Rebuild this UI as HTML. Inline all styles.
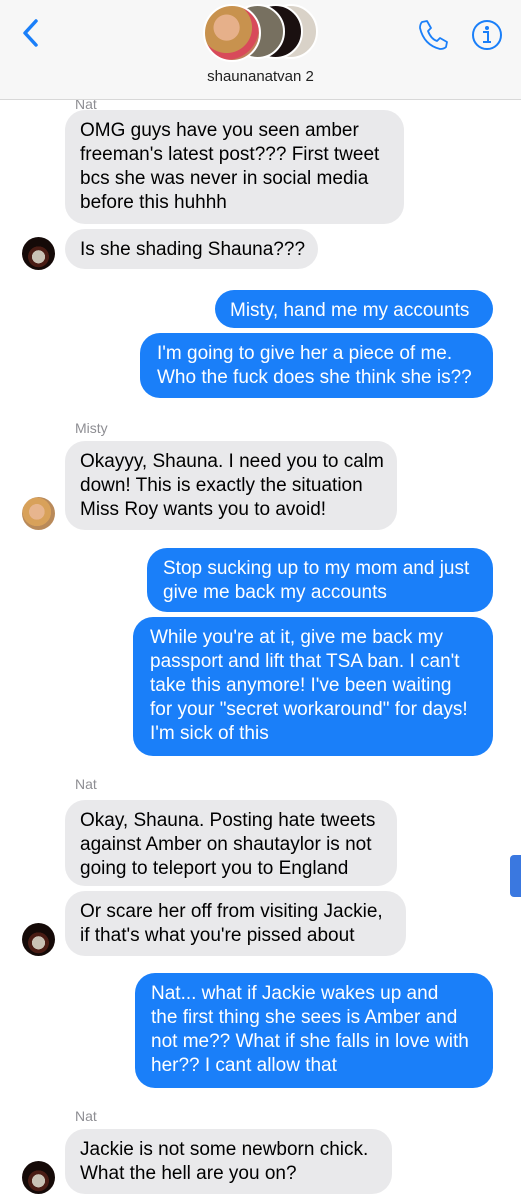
<!DOCTYPE html>
<html><head><meta charset="utf-8"><style>
*{margin:0;padding:0;box-sizing:border-box}
body{width:521px;height:1200px;overflow:hidden;background:#fff;font-family:"Liberation Sans",sans-serif;position:relative}
.hdr{position:absolute;left:0;top:0;width:521px;height:100px;background:#f7f7f7;border-bottom:1px solid #d8d8d8}
.b{position:absolute;border-radius:20px;font-size:19px;line-height:24px;padding:9px 15px 8px 15px;white-space:nowrap}
.g{background:#e9e9eb;color:#000}
.u{background:#1a7ff9;color:#fff}
.av{position:absolute;left:22px;width:33px;height:33px;border-radius:50%;background:radial-gradient(circle at 50% 60%,#c9c2b5 0 25%,#4a1c14 26% 40%,#150a08 41%)}
.av.m{background:radial-gradient(circle at 45% 45%,#e7b58e 0 30%,#d8a15a 31% 55%,#b98a5a 56%)}
.lbl{position:absolute;left:75px;font-size:14px;color:#8e8e93}
</style></head><body>
<div class="hdr">
<svg style="position:absolute;left:20px;top:18px" width="20" height="30"><path d="M16 3 L5 15 L16 27" fill="none" stroke="#1a7ff9" stroke-width="3.5" stroke-linecap="round" stroke-linejoin="round"/></svg>
<div style="position:absolute;left:263px;top:4px;width:55px;height:55px;border-radius:50%;border:2px solid #fff;background:#d9d2c8"></div>
<div style="position:absolute;left:248px;top:4px;width:55px;height:55px;border-radius:50%;border:2px solid #fff;background:#1a1010"></div>
<div style="position:absolute;left:230px;top:4px;width:55px;height:55px;border-radius:50%;border:2px solid #fff;background:#777060"></div>
<div style="position:absolute;left:203px;top:4px;width:58px;height:58px;border-radius:50%;border:2px solid #fff;background:radial-gradient(circle at 40% 40%,#e6b08a 0 28%,#c8924e 29% 55%,#d84a5a 56% 70%,#c27f5a 71%)"></div>
<div style="position:absolute;left:0;width:521px;top:68px;text-align:center;font-size:15px;color:#222">shaunanatvan 2</div>
<svg style="position:absolute;left:416px;top:18px" width="34" height="34" viewBox="0 0 34 34"><path d="M6 4 L11 3 L15 10 L12 13 Q15 21 21 23 L24 20 L31 24 L30 29 Q28 31 24 31 Q8 27 4 10 Q4 6 6 4Z" fill="none" stroke="#1a7ff9" stroke-width="1.8" stroke-linejoin="round"/></svg>
<svg style="position:absolute;left:471px;top:19px" width="32" height="32"><circle cx="16" cy="16" r="14" fill="none" stroke="#1a7ff9" stroke-width="2"/><circle cx="16" cy="9" r="2" fill="#1a7ff9"/><path d="M12 13 H17 V23 H20 M12 23 H20" stroke="#1a7ff9" stroke-width="2" fill="none"/></svg>
</div>
<div class="lbl" style="top:96px;clip-path:inset(4px 0 0 0)">Nat</div>
<div class="b g" style="left:65px;top:110px;width:339px;height:114px">OMG guys have you seen amber<br>freeman's latest post??? First tweet<br>bcs she was never in social media<br>before this huhhh</div>
<div class="av" style="top:237px"></div>
<div class="b g" style="left:65px;top:229px;width:253px;height:40px">Is she shading Shauna???</div>
<div class="b u" style="left:215px;top:290px;width:278px;height:38px">Misty, hand me my accounts</div>
<div class="b u" style="left:140px;top:333px;width:353px;height:65px;padding-left:17px">I'm going to give her a piece of me.<br>Who the fuck does she think she is??</div>
<div class="lbl" style="top:420px">Misty</div>
<div class="av m" style="top:497px"></div>
<div class="b g" style="left:65px;top:441px;width:332px;height:89px">Okayyy, Shauna. I need you to calm<br>down! This is exactly the situation<br>Miss Roy wants you to avoid!</div>
<div class="b u" style="left:147px;top:548px;width:346px;height:64px;padding-left:16px">Stop sucking up to my mom and just<br>give me back my accounts</div>
<div class="b u" style="left:133px;top:617px;width:360px;height:139px;padding-left:17px">While you're at it, give me back my<br>passport and lift that TSA ban. I can't<br>take this anymore! I've been waiting<br>for your "secret workaround" for days!<br>I'm sick of this</div>
<div class="lbl" style="top:776px">Nat</div>
<div class="b g" style="left:65px;top:800px;width:332px;height:86px">Okay, Shauna. Posting hate tweets<br>against Amber on shautaylor is not<br>going to teleport you to England</div>
<div class="av" style="top:923px"></div>
<div class="b g" style="left:65px;top:891px;width:341px;height:65px">Or scare her off from visiting Jackie,<br>if that's what you're pissed about</div>
<div class="b u" style="left:135px;top:973px;width:358px;height:115px;padding-left:16px">Nat... what if Jackie wakes up and<br>the first thing she sees is Amber and<br>not me?? What if she falls in love with<br>her?? I cant allow that</div>
<div class="lbl" style="top:1108px">Nat</div>
<div class="av" style="top:1161px"></div>
<div class="b g" style="left:65px;top:1129px;width:327px;height:65px">Jackie is not some newborn chick.<br>What the hell are you on?</div>
<div style="position:absolute;left:510px;top:855px;width:11px;height:42px;background:#3a78e0;border-radius:4px 0 0 4px"></div>
</body></html>
